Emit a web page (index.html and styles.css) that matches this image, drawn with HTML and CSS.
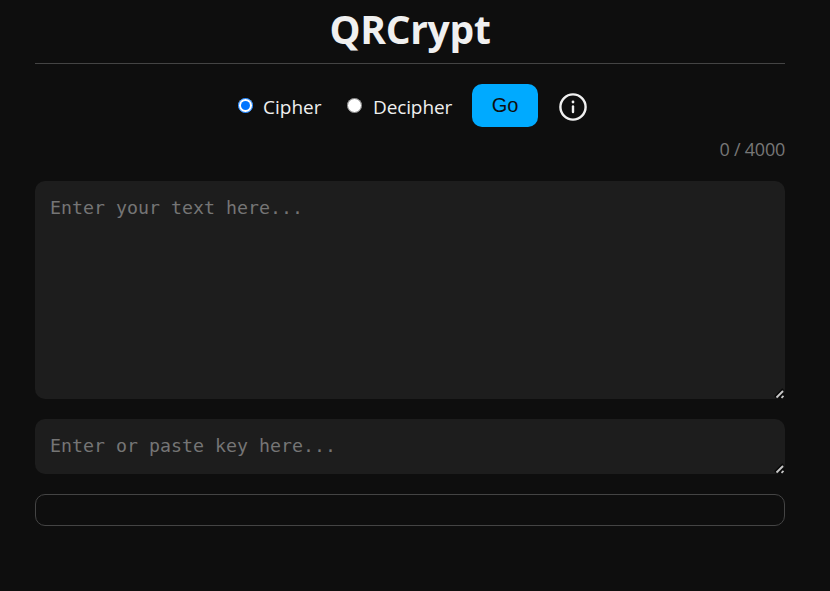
FILE: index.html
```html
<!DOCTYPE html>
<html lang="en">
<head>
<meta charset="utf-8">
<title>QRCrypt</title>
<link rel="stylesheet" href="styles.css">
</head>
<body>
<main class="container">
  <h1 class="title"><span class="title-text">QRCrypt</span></h1>
  <form class="controls">
    <label class="option cipher"><input type="radio" name="mode" checked><span>Cipher</span></label>
    <label class="option decipher"><input type="radio" name="mode"><span>Decipher</span></label>
    <button class="go" type="button">Go</button>
    <svg class="info" viewBox="0 0 28 28" width="28" height="28" fill="none" stroke="#f0f0f0" stroke-width="2.4">
      <circle cx="14" cy="14" r="12.6"/>
      <path d="M14 13.4v5.6" stroke-linecap="round"/>
      <circle cx="14" cy="9" r="1.4" fill="#f0f0f0" stroke="none"/>
    </svg>
  </form>
  <div class="counter"><span>0 / 4000</span></div>
  <textarea class="field message" placeholder="Enter your text here..."></textarea>
  <textarea class="field key" placeholder="Enter or paste key here..."></textarea>
  <div class="output"></div>
</main>
</body>
</html>
```
FILE: styles.css
```css
* { box-sizing: border-box; }
html { background: #0e0e0e; }
body {
  margin: 0;
  background: #0e0e0e;
  color: #f0f0f0;
  font: 19px/26px "Segoe UI", "Open Sans", "Noto Sans", sans-serif;
  overflow: hidden;
}
.container { width: 750px; margin-left: 35px; }
.title {
  height: 64px;
  margin: 0;
  padding-top: 2px;
  border-bottom: 1px solid #444;
  font-size: 39px;
  line-height: 54px;
  font-weight: 700;
  letter-spacing: -0.3px;
  text-align: center;
}
.controls {
  display: flex;
  align-items: center;
  height: 43px;
  margin: 20px 0 0;
  padding-left: 203px;
}
.option { display: flex; align-items: center; }
.option input { width: 15px; height: 15px; margin: 0 10px 1px 0; }
.option span { position: relative; top: 1px; }
.cipher { width: 109px; }
.decipher { width: 125px; }
.decipher input { margin-right: 11px; }
.decipher span { letter-spacing: -0.12px; }
.go {
  width: 66px;
  height: 43px;
  padding: 0 0 1px;
  border: 0;
  border-radius: 10px;
  background: #00aaff;
  color: #0e0e0e;
  font: 20px "Liberation Sans", Arial, sans-serif;
}
.info { margin: 3px 0 0 21px; }
.counter {
  height: 26px;
  margin: 9px 0 19px;
  color: #777;
  font-size: 18px;
  letter-spacing: -0.25px;
  text-align: right;
}
.field {
  display: block;
  width: 100%;
  margin: 0 0 20px;
  padding: 15px;
  border: 0;
  border-radius: 10px;
  background: #1d1d1d;
  color: #f0f0f0;
  font: 18.27px/24px "DejaVu Sans Mono", monospace;
  overflow: hidden;
  resize: both;
}
.field::placeholder { color: #757575; }
.field::-webkit-resizer {
  background: url("data:image/svg+xml,%3Csvg xmlns='http://www.w3.org/2000/svg' width='15' height='15' fill='none'%3E%3Cpath d='M5 13l8-8M9.5 14L14 9.5' stroke='%23080808' stroke-width='2'/%3E%3Cpath d='M6.5 13.5l6.5-6.5M11.5 13.8l2-2' stroke='%23c8c8c8' stroke-width='1.8'/%3E%3C/svg%3E") right bottom no-repeat;
}
.message { height: 218px; }
.key { height: 55px; }
.output { height: 32px; border: 1px solid #444; border-radius: 10px; }
```
